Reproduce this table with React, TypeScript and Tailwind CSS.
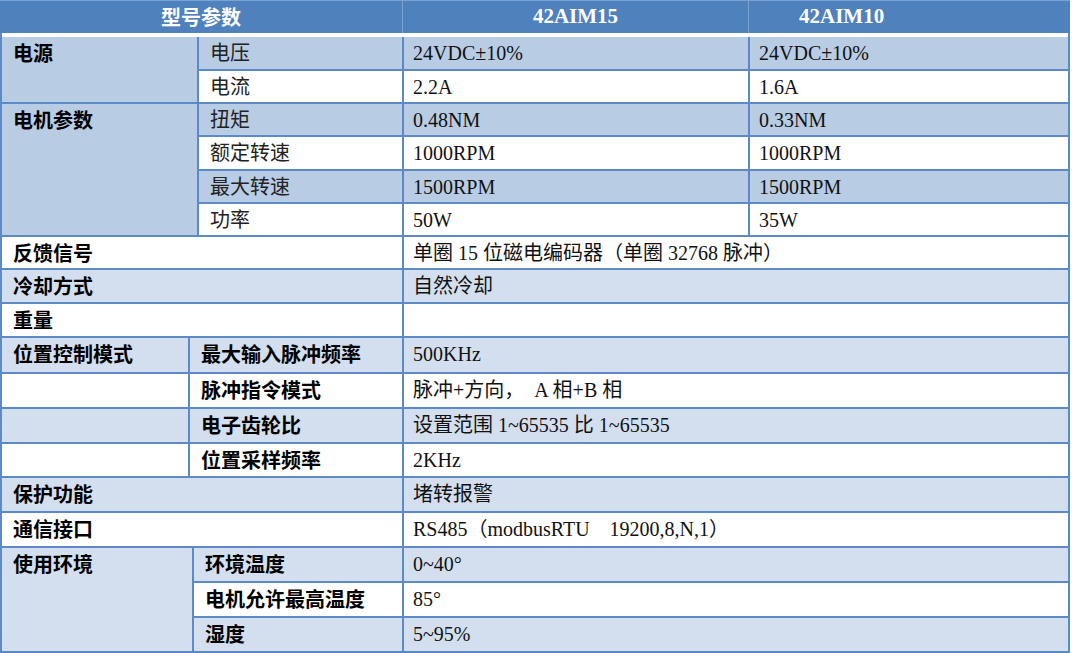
import React from "react";

// colours sampled from the spec sheet
const DARK = "bg-[#b8cce4]";
const LIGHT = "bg-[#d3dfef]";
const WHITE = "bg-white";

const labelFont = {
  fontFamily: '"Noto Sans CJK SC", "Noto Sans", sans-serif',
};
const valueFont = {
  fontFamily: '"Liberation Serif", "Noto Sans CJK SC", serif',
};

type CellProps = {
  bg: string;
  bold?: boolean;
  className?: string;
  children?: React.ReactNode;
};

function Label({ bg, className = "", children }: CellProps) {
  return (
    <div
      style={labelFont}
      className={`${bg} ${className} pl-[11px] text-[20px] font-bold leading-[32px] text-black whitespace-pre`}
    >
      {children}
    </div>
  );
}

function Value({ bg, className = "", children }: CellProps) {
  return (
    <div
      style={valueFont}
      className={`${bg} ${className} pl-[9px] text-[20px] leading-[32px] text-[#111] whitespace-pre`}
    >
      {children}
    </div>
  );
}

export default function App() {
  return (
    <div className="w-[1072px] h-[653px] bg-white">
      <div className="w-[1070px]">
        {/* header */}
        <div className="h-[33px] bg-[#4f81bd] flex border-t border-[#7da2d1] text-white font-bold text-[20px]">
          <div
            style={labelFont}
            className="w-[403px] border-r border-[#7da2d1] flex items-center justify-center"
          >
            型号参数
          </div>
          <div
            style={valueFont}
            className="w-[346px] border-r border-[#7da2d1] flex items-center justify-center text-[21px]"
          >
            42AIM15
          </div>
          <div style={valueFont} className="flex-1 flex items-center pl-[50px] text-[21px]">
            42AIM10
          </div>
        </div>
        <div className="h-[4px] bg-white border-x-2 border-[#5b8ac6]" />

        <div className="bg-[#5b8ac6] px-[2px] pb-[2px] flex flex-col gap-[2px]">
          {/* power / motor */}
          <div className="grid grid-cols-[195px_203px_344px_318px] grid-rows-[32px_31px_31px_32px_31px_31px_31px_32px_32px] gap-[2px]">
            <Label bg={DARK} className="row-span-2">电源</Label>
            <Value bg={DARK} className="pl-[11px] text-[#222]">电压</Value>
            <Value bg={DARK}>24VDC±10%</Value>
            <Value bg={DARK}>24VDC±10%</Value>
            <Value bg={WHITE} className="pl-[11px] text-[#222]">电流</Value>
            <Value bg={WHITE}>2.2A</Value>
            <Value bg={WHITE}>1.6A</Value>

            <Label bg={DARK} className="row-span-4">电机参数</Label>
            <Value bg={DARK} className="pl-[11px] text-[#222]">扭矩</Value>
            <Value bg={DARK}>0.48NM</Value>
            <Value bg={DARK}>0.33NM</Value>
            <Value bg={WHITE} className="pl-[11px] text-[#222]">额定转速</Value>
            <Value bg={WHITE}>1000RPM</Value>
            <Value bg={WHITE}>1000RPM</Value>
            <Value bg={DARK} className="pl-[11px] text-[#222]">最大转速</Value>
            <Value bg={DARK}>1500RPM</Value>
            <Value bg={DARK}>1500RPM</Value>
            <Value bg={WHITE} className="pl-[11px] text-[#222]">功率</Value>
            <Value bg={WHITE}>50W</Value>
            <Value bg={WHITE}>35W</Value>

            <Label bg={WHITE} className="col-span-2">反馈信号</Label>
            <Value bg={WHITE} className="col-span-2">单圈 15 位磁电编码器（单圈 32768 脉冲）</Value>
            <Label bg={LIGHT} className="col-span-2">冷却方式</Label>
            <Value bg={LIGHT} className="col-span-2">自然冷却</Value>
            <Label bg={WHITE} className="col-span-2">重量</Label>
            <Value bg={WHITE} className="col-span-2" />
          </div>

          {/* position control, protection, comms */}
          <div className="grid grid-cols-[186px_212px_664px] grid-rows-[34px_33px_33px_32px_33px_33px] gap-[2px]">
            <Label bg={LIGHT}>位置控制模式</Label>
            <Label bg={LIGHT}>最大输入脉冲频率</Label>
            <Value bg={LIGHT}>500KHz</Value>
            <Label bg={WHITE} />
            <Label bg={WHITE}>脉冲指令模式</Label>
            <Value bg={WHITE}>{"脉冲+方向，  A 相+B 相"}</Value>
            <Label bg={LIGHT} />
            <Label bg={LIGHT}>电子齿轮比</Label>
            <Value bg={LIGHT}>设置范围 1~65535 比 1~65535</Value>
            <Label bg={WHITE} />
            <Label bg={WHITE}>位置采样频率</Label>
            <Value bg={WHITE}>2KHz</Value>

            <Label bg={LIGHT} className="col-span-2">保护功能</Label>
            <Value bg={LIGHT}>堵转报警</Value>
            <Label bg={WHITE} className="col-span-2">通信接口</Label>
            <Value bg={WHITE}>{"RS485（modbusRTU    19200,8,N,1）"}</Value>
          </div>

          {/* environment */}
          <div className="grid grid-cols-[190px_208px_664px] grid-rows-[33px_33px_33px] gap-[2px]">
            <Label bg={LIGHT} className="row-span-3">使用环境</Label>
            <Label bg={LIGHT}>环境温度</Label>
            <Value bg={LIGHT}>0~40°</Value>
            <Label bg={WHITE}>电机允许最高温度</Label>
            <Value bg={WHITE}>85°</Value>
            <Label bg={LIGHT}>湿度</Label>
            <Value bg={LIGHT}>5~95%</Value>
          </div>
        </div>
      </div>
    </div>
  );
}
